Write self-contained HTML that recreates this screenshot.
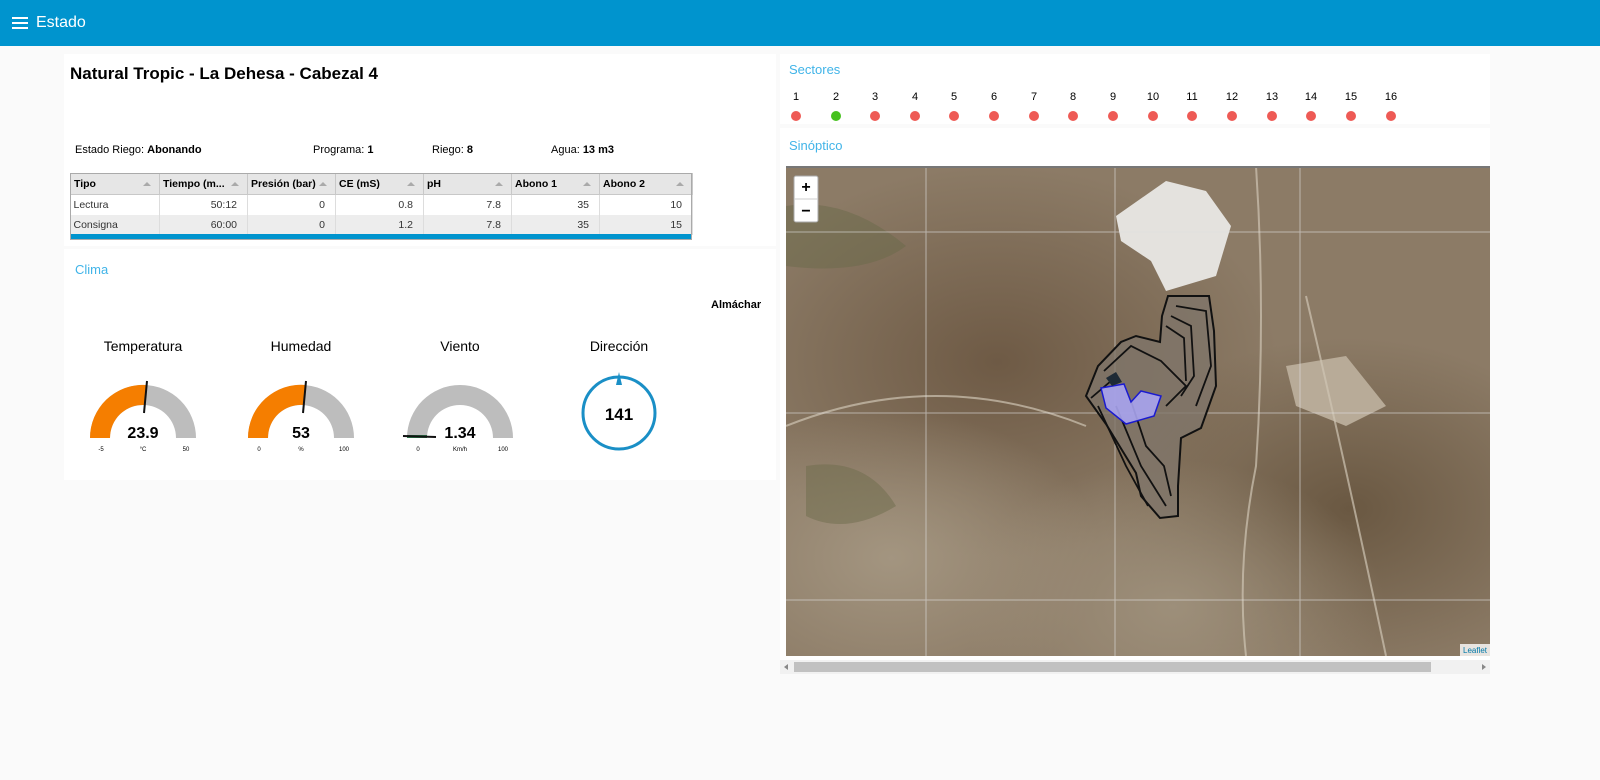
<!DOCTYPE html>
<html><head><meta charset="utf-8"><style>
*{box-sizing:border-box;margin:0;padding:0}
body{width:1600px;height:780px;background:#fafafa;font-family:"Liberation Sans",sans-serif;position:relative;overflow:hidden;color:#000}
.hdr{position:absolute;left:0;top:0;width:1600px;height:46px;background:#0094ce;color:#fff}
.hdr span{position:absolute;left:36px;top:14px;font-size:16px}
.card{position:absolute;background:#fff}
.t{position:absolute;font-size:13px;color:#41b4e8}
table{border-collapse:collapse;position:absolute;left:70px;top:173px;width:622px;font-size:10.5px;table-layout:fixed}
th{background:#e6e6e6;font-weight:bold;text-align:left;height:21px;border:1px solid #c8c8c8;padding-left:3px;position:relative}
th:after{content:"";position:absolute;right:8px;top:8px;border:4px solid transparent;border-bottom:4px solid #aaa;border-top:0}
td{height:20px;border-right:1px solid #ddd;text-align:right;padding-right:10px;color:#333}
td:first-child{text-align:left;padding-left:3px}
.s{position:absolute;font-size:11px}
.g{position:absolute;font-size:14px;text-align:center;width:140px}
.sec{position:absolute;top:91px;font-size:11px;width:20px;text-align:center}
.dot{position:absolute;top:111px;width:10px;height:10px;border-radius:50%;background:#ee5a55}
</style></head><body>
<div class="hdr"><svg style="position:absolute;left:12px;top:17px" width="16" height="12"><rect y="0" width="16" height="2" fill="#fff"/><rect y="5" width="16" height="2" fill="#fff"/><rect y="10" width="16" height="2" fill="#fff"/></svg><span>Estado</span></div>

<div class="card" style="left:64px;top:54px;width:712px;height:192px"></div>
<div class="card" style="left:64px;top:249px;width:712px;height:231px"></div>
<div style="position:absolute;left:70px;top:64px;font-size:17px;font-weight:bold">Natural Tropic - La Dehesa - Cabezal 4</div>
<div class="s" style="left:75px;top:144px">Estado Riego: <b>Abonando</b></div>
<div class="s" style="left:313px;top:144px">Programa: <b>1</b></div>
<div class="s" style="left:432px;top:144px">Riego: <b>8</b></div>
<div class="s" style="left:551px;top:144px">Agua: <b>13 m3</b></div>
<table>
<colgroup><col style="width:89px"><col style="width:88px"><col style="width:88px"><col style="width:88px"><col style="width:88px"><col style="width:88px"><col style="width:93px"></colgroup>
<tr><th>Tipo</th><th>Tiempo (m...</th><th>Presión (bar)</th><th>CE (mS)</th><th>pH</th><th>Abono 1</th><th>Abono 2</th></tr>
<tr><td>Lectura</td><td>50:12</td><td>0</td><td>0.8</td><td>7.8</td><td>35</td><td>10</td></tr>
<tr style="background:#ededed"><td>Consigna</td><td>60:00</td><td>0</td><td>1.2</td><td>7.8</td><td>35</td><td>15</td></tr>
</table>
<div style="position:absolute;left:70px;top:234px;width:622px;height:6px;background:#0094ce"></div>
<div style="position:absolute;left:70px;top:173px;width:622px;height:67px;border:1px solid #aaa"></div>

<div class="t" style="left:75px;top:262px">Clima</div>
<div style="position:absolute;left:711px;top:299px;font-size:11px;font-weight:bold">Almáchar</div>
<div class="g" style="left:73px;top:338px">Temperatura</div>
<div class="g" style="left:231px;top:338px">Humedad</div>
<div class="g" style="left:390px;top:338px">Viento</div>
<div class="g" style="left:549px;top:338px">Dirección</div>
<svg style="position:absolute;left:0;top:370px" width="780" height="100">
<g font-family="Liberation Sans" text-anchor="middle">
<path d="M90 68 A53 53 0 0 1 196 68 L176 68 A33 33 0 0 0 110 68Z" fill="#bdbdbd"/>
<path d="M90 68 A53 53 0 0 1 146 15 L145 35 A33 33 0 0 0 110 68Z" fill="#f57e00"/>
<line x1="144" y1="43" x2="147" y2="11" stroke="#111" stroke-width="2"/>
<text x="143" y="68" font-size="16" font-weight="bold">23.9</text>
<text x="101" y="81" font-size="6">-5</text><text x="143" y="81" font-size="6">°C</text><text x="186" y="81" font-size="6">50</text>
<path d="M248 68 A53 53 0 0 1 354 68 L334 68 A33 33 0 0 0 268 68Z" fill="#bdbdbd"/>
<path d="M248 68 A53 53 0 0 1 306 15 L304 35 A33 33 0 0 0 268 68Z" fill="#f57e00"/>
<line x1="303" y1="43" x2="306" y2="11" stroke="#111" stroke-width="2"/>
<text x="301" y="68" font-size="16" font-weight="bold">53</text>
<text x="259" y="81" font-size="6">0</text><text x="301" y="81" font-size="6">%</text><text x="344" y="81" font-size="6">100</text>
<path d="M407 68 A53 53 0 0 1 513 68 L493 68 A33 33 0 0 0 427 68Z" fill="#bdbdbd"/>
<rect x="407" y="65" width="20" height="3" fill="#2a7a4a"/>
<line x1="403" y1="66" x2="436" y2="67" stroke="#111" stroke-width="2"/>
<text x="460" y="68" font-size="16" font-weight="bold">1.34</text>
<text x="418" y="81" font-size="6">0</text><text x="460" y="81" font-size="6">Km/h</text><text x="503" y="81" font-size="6">100</text>
<circle cx="619" cy="43" r="36" fill="none" stroke="#1a8fc6" stroke-width="3"/>
<path d="M619 2 L622 15 L616 15Z" fill="#1a8fc6"/>
<text x="619" y="50" font-size="17" font-weight="bold">141</text>
</g></svg>

<div class="card" style="left:780px;top:54px;width:710px;height:70px"></div>
<div class="card" style="left:780px;top:128px;width:710px;height:532px"></div>
<div class="t" style="left:789px;top:62px">Sectores</div>
<div class="sec" style="left:786px">1</div><div class="dot" style="left:791px"></div>
<div class="sec" style="left:826px">2</div><div class="dot" style="left:831px;background:#46c11e"></div>
<div class="sec" style="left:865px">3</div><div class="dot" style="left:870px"></div>
<div class="sec" style="left:905px">4</div><div class="dot" style="left:910px"></div>
<div class="sec" style="left:944px">5</div><div class="dot" style="left:949px"></div>
<div class="sec" style="left:984px">6</div><div class="dot" style="left:989px"></div>
<div class="sec" style="left:1024px">7</div><div class="dot" style="left:1029px"></div>
<div class="sec" style="left:1063px">8</div><div class="dot" style="left:1068px"></div>
<div class="sec" style="left:1103px">9</div><div class="dot" style="left:1108px"></div>
<div class="sec" style="left:1143px">10</div><div class="dot" style="left:1148px"></div>
<div class="sec" style="left:1182px">11</div><div class="dot" style="left:1187px"></div>
<div class="sec" style="left:1222px">12</div><div class="dot" style="left:1227px"></div>
<div class="sec" style="left:1262px">13</div><div class="dot" style="left:1267px"></div>
<div class="sec" style="left:1301px">14</div><div class="dot" style="left:1306px"></div>
<div class="sec" style="left:1341px">15</div><div class="dot" style="left:1346px"></div>
<div class="sec" style="left:1381px">16</div><div class="dot" style="left:1386px"></div>
<div class="t" style="left:789px;top:138px">Sinóptico</div>

<svg style="position:absolute;left:786px;top:166px" width="704" height="490">
<defs>
<radialGradient id="a" cx="0.3" cy="0.4" r="0.4"><stop offset="0" stop-color="#6e5a45"/><stop offset="1" stop-color="#6e5a45" stop-opacity="0"/></radialGradient>
<radialGradient id="b" cx="0.8" cy="0.7" r="0.35"><stop offset="0" stop-color="#6a5842"/><stop offset="1" stop-color="#6a5842" stop-opacity="0"/></radialGradient>
<radialGradient id="c" cx="0.15" cy="0.8" r="0.3"><stop offset="0" stop-color="#a39580"/><stop offset="1" stop-color="#a39580" stop-opacity="0"/></radialGradient>
<radialGradient id="d" cx="0.55" cy="0.9" r="0.3"><stop offset="0" stop-color="#9d8f7a"/><stop offset="1" stop-color="#9d8f7a" stop-opacity="0"/></radialGradient>
</defs>
<rect width="704" height="490" fill="#8c7b66"/>
<rect width="704" height="490" fill="url(#a)"/>
<rect width="704" height="490" fill="url(#b)"/>
<rect width="704" height="490" fill="url(#c)"/>
<rect width="704" height="490" fill="url(#d)"/>
<path d="M0 40 Q60 30 120 80 Q80 110 0 100Z" fill="#6a6a4a" opacity="0.5"/>
<path d="M20 300 Q80 290 110 340 Q60 370 20 350Z" fill="#6d6c4c" opacity="0.5"/>
<path d="M330 50 L380 15 L420 25 L445 60 L430 110 L380 125 L365 95 L335 75Z" fill="#e4e2de"/>
<path d="M500 200 L560 190 L600 240 L560 260 L510 240Z" fill="#b8ab98"/>
<g stroke="#cfc4b4" stroke-width="2" fill="none" opacity="0.7">
<path d="M470 0 Q480 150 470 300 Q450 400 460 490"/><path d="M520 130 Q560 300 600 490"/><path d="M0 260 Q150 200 300 260"/></g>
<g stroke="#e0e0e0" stroke-width="1" opacity="0.6">
<line x1="140" y1="0" x2="140" y2="490"/><line x1="329" y1="0" x2="329" y2="490"/><line x1="514" y1="0" x2="514" y2="490"/>
<line x1="0" y1="66" x2="704" y2="66"/><line x1="0" y1="247" x2="704" y2="247"/><line x1="0" y1="434" x2="704" y2="434"/></g>
<path d="M382 130 L423 130 L428 165 L430 220 L415 262 L395 272 L392 320 L392 350 L374 352 L355 330 L350 307 L320 258 L300 230 L312 200 L335 176 L350 170 L374 176 L376 150Z" fill="#7f766a" fill-opacity="0.8" stroke="#111" stroke-width="2"/>
<g fill="none" stroke="#111" stroke-width="1.8">
<path d="M390 140 L420 145 L425 200 L410 240"/><path d="M385 150 L405 160 L408 210 L395 230"/><path d="M380 160 L398 172 L400 215"/><path d="M318 205 L345 180 L375 195 L400 220 L380 240"/><path d="M330 240 L355 300 L380 340"/><path d="M345 235 L360 280 L378 300 L385 330"/><path d="M325 215 L305 232"/><path d="M312 240 L340 300 L362 340"/></g>
<path d="M315 222 L338 218 L345 236 L355 225 L375 230 L368 250 L340 258 L320 242Z" fill="#a9a4f0" fill-opacity="0.9" stroke="#1a1ad0" stroke-width="1.5"/>
<path d="M320 212 L330 206 L336 216 L326 220Z" fill="#1e2a35"/>
<rect x="8" y="10" width="24" height="46" rx="2" fill="#fff" stroke="#aaa"/>
<line x1="8" y1="33" x2="32" y2="33" stroke="#ccc"/>
<text x="20" y="26" font-family="Liberation Sans" font-size="16" font-weight="bold" text-anchor="middle">+</text>
<text x="20" y="50" font-family="Liberation Sans" font-size="16" font-weight="bold" text-anchor="middle">−</text>
<rect x="674" y="478" width="30" height="12" fill="#fff" fill-opacity="0.8"/>
<text x="677" y="487" font-family="Liberation Sans" font-size="8" fill="#0078a8">Leaflet</text>
<rect x="0" y="0" width="704" height="2" fill="#777"/>
</svg>
<div style="position:absolute;left:780px;top:660px;width:710px;height:14px;background:#f1f1f1"></div>
<div style="position:absolute;left:794px;top:662px;width:637px;height:10px;background:#c1c1c1"></div>
<div style="position:absolute;left:784px;top:664px;border:3px solid transparent;border-right:4px solid #888;border-left:0"></div>
<div style="position:absolute;left:1482px;top:664px;border:3px solid transparent;border-left:4px solid #888;border-right:0"></div>
</body></html>
